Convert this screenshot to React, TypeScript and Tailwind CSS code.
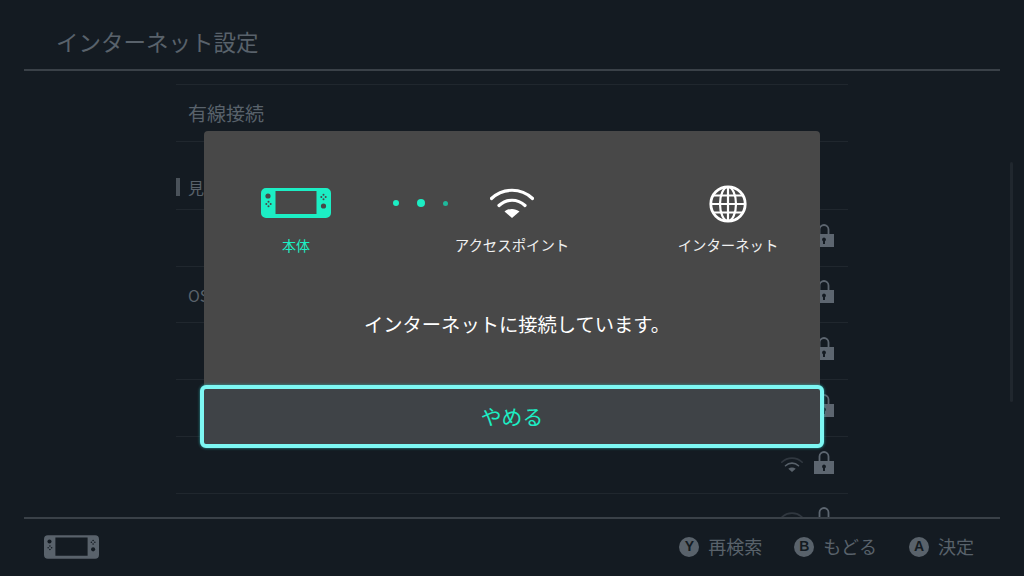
const jp = "font-['Noto_Sans_CJK_JP','Noto_Sans',sans-serif]"

function ConsoleIcon({ className, hole }: { className: string; hole: string }) {
  return (
    <svg viewBox="0 0 70 30" className={className}>
      <path fillRule="evenodd" fill="currentColor" d="M5 0H65a5 5 0 0 1 5 5V25a5 5 0 0 1-5 5H5a5 5 0 0 1-5-5V5a5 5 0 0 1 5-5ZM14.500 3V26H55.500V3Z" />
      <circle cx="7" cy="8" r="2.600" fill={hole} />
      <circle cx="62.500" cy="18" r="2.600" fill={hole} />
      <g fill={hole}>
        <circle cx="7.500" cy="13.800" r="1" />
        <circle cx="7.500" cy="18.200" r="1" />
        <circle cx="5.300" cy="16" r="1" />
        <circle cx="9.700" cy="16" r="1" />
        <circle cx="62.500" cy="6.800" r="1" />
        <circle cx="62.500" cy="11.200" r="1" />
        <circle cx="60.300" cy="9" r="1" />
        <circle cx="64.700" cy="9" r="1" />
      </g>
    </svg>
  )
}

function Wifi({ className, dimOuter }: { className: string; dimOuter?: boolean }) {
  return (
    <svg viewBox="0 0 44 32" fill="none" stroke="currentColor" className={className}>
      <path d="M1.500 12.500C13 1.500 31 1.500 42.500 12.500" strokeWidth="3.200" strokeLinecap="round" opacity={dimOuter ? 0.4 : 1} />
      <path d="M9 19.500C16.500 12.500 27.500 12.500 35 19.500" strokeWidth="3.200" strokeLinecap="round" />
      <path d="M22 32L14.500 25.500C19 22 25 22 29.500 25.500Z" fill="currentColor" stroke="none" />
    </svg>
  )
}

function Lock() {
  return (
    <svg viewBox="0 0 20 23" className="h-[23px] w-5 text-[#5d6670]">
      <path d="M5.500 10V5.500a4.500 4.500 0 0 1 9 0V10" fill="none" stroke="currentColor" strokeWidth="1.800" />
      <path fillRule="evenodd" fill="currentColor" d="M0 10H20V23H0ZM10 13.500a2 2 0 0 0-1 3.700V20H11V17.200A2 2 0 0 0 10 13.500Z" />
    </svg>
  )
}

function Globe() {
  return (
    <svg viewBox="0 0 38 38" fill="none" stroke="currentColor" strokeWidth="2.200" className="h-[38px] w-[38px] text-white">
      <circle cx="19" cy="19" r="17.200" strokeWidth="2.800" />
      <ellipse cx="19" cy="19" rx="8" ry="17" />
      <path d="M2 19H36M4.500 10.500H33.500M4.500 27.500H33.500M19 2V36" />
    </svg>
  )
}

function Hint({ glyph, label }: { glyph: string; label: string }) {
  return (
    <div className="flex items-center gap-[9px]">
      <span className="flex h-5 w-5 items-center justify-center rounded-full bg-[#59626b] font-['Liberation_Sans',sans-serif] text-[14px] font-bold text-[#141b22]">
        {glyph}
      </span>
      <span className="text-[18px] text-[#59626b]">{label}</span>
    </div>
  )
}

// dimmed network rows behind the dialog
const rows = [
  { h: 'h-[57px]', label: '' },
  { h: 'h-[56px]', label: 'OS' },
  { h: 'h-[57px]', label: '' },
  { h: 'h-[57px]', label: '' },
  { h: 'h-[57px]', label: '', wifi: true },
]

export default function App() {
  return (
    <div className={`relative flex h-[576px] w-[1024px] flex-col overflow-hidden bg-[#141b22] ${jp}`}>
      <header className="mx-6 flex h-[71px] shrink-0 items-center border-b-2 border-[#3a4148] pl-8 pt-[15px]">
        <h1 className="text-[22.500px] text-[#59626b]">インターネット設定</h1>
      </header>

      <main className="relative flex-1 overflow-hidden">
        <div className="ml-[176px] mt-[13px] w-[672px]">
          <div className="flex h-[58px] items-center border-y border-[#20272e] pl-3 text-[19px] text-[#59626b]">有線接続</div>
          <div className="flex h-[68px] items-center border-b border-[#20272e] pt-[22px] text-[16px] text-[#59626b]">
            <span className="mr-2 h-[18px] w-1 bg-[#4a525a]" />見
          </div>
          {rows.map((r, i) => (
            <div key={i} className={`flex ${r.h} items-center justify-between border-b border-[#20272e] pl-3 text-[16px] text-[#59626b]`}>
              <span>{r.label}</span>
              <div className="flex items-center gap-[10px] pb-[6px] pr-[14px]">
                {r.wifi && <Wifi className="mt-[3px] h-4 w-6 text-[#59626b]" dimOuter />}
                <Lock />
              </div>
            </div>
          ))}
          <div className="flex h-8 items-start justify-end gap-[10px] pr-[14px] pt-[13px]">
            <Wifi className="mt-[4px] h-4 w-6 text-[#59626b]" dimOuter />
            <Lock />
          </div>
        </div>
        <div className="absolute right-[11px] top-[91px] h-[240px] w-[3px] rounded bg-[#20272e]" />
      </main>

      <footer className="mx-6 flex h-[59px] shrink-0 items-center justify-between border-t-2 border-[#3a4148] pb-[2px] pl-5 pr-[26px]">
        <ConsoleIcon className="h-6 w-[55px] text-[#59626b]" hole="#141b22" />
        <div className="flex items-center gap-[32px]">
          <Hint glyph="Y" label="再検索" />
          <Hint glyph="B" label="もどる" />
          <Hint glyph="A" label="決定" />
        </div>
      </footer>

      {/* connection test dialog */}
      <div className="absolute left-[204px] top-[131px] h-[316px] w-[616px] rounded-t-[4px] bg-[#484848]">
        <div className="-mx-4 flex pt-[54px]">
          <div className="flex w-[216px] flex-col items-center">
            <div className="h-[38px] pt-[3px]">
              <ConsoleIcon className="h-[30px] w-[70px] text-[#1ceec4]" hole="#484848" />
            </div>
            <span className="mt-[12px] text-[14px] leading-5 text-[#1ceec4]">本体</span>
          </div>
          <div className="flex w-[216px] flex-col items-center">
            <div className="h-[38px] pt-[1px]">
              <Wifi className="h-[32px] w-[44px] text-white" />
            </div>
            <span className="mt-[12px] text-[14.400px] leading-5 text-[#f0f0f0]">アクセスポイント</span>
          </div>
          <div className="flex w-[216px] flex-col items-center">
            <Globe />
            <span className="mt-[12px] text-[14.400px] leading-5 text-[#f0f0f0]">インターネット</span>
          </div>
        </div>
        <div className="absolute left-[189px] top-[68px] flex w-[55px] items-center justify-between">
          <span className="h-[6px] w-[6px] rounded-full bg-[#1ceec4]" />
          <span className="h-2 w-2 rounded-full bg-[#1ceec4]" />
          <span className="h-[5px] w-[5px] rounded-full bg-[#1fb89b]" />
        </div>
        <p className="mt-[55px] pl-[10px] text-center text-[19.300px] text-white">インターネットに接続しています。</p>
      </div>

      <button className="absolute left-[200px] top-[385px] flex h-[63px] w-[624px] items-center justify-center rounded-[6px] border-[4px] border-[#7df7f3] bg-[#3f4347] text-[20.800px] text-[#1ceec4] shadow-[0_0_3px_#2fa8a8]">
        やめる
      </button>
    </div>
  )
}
